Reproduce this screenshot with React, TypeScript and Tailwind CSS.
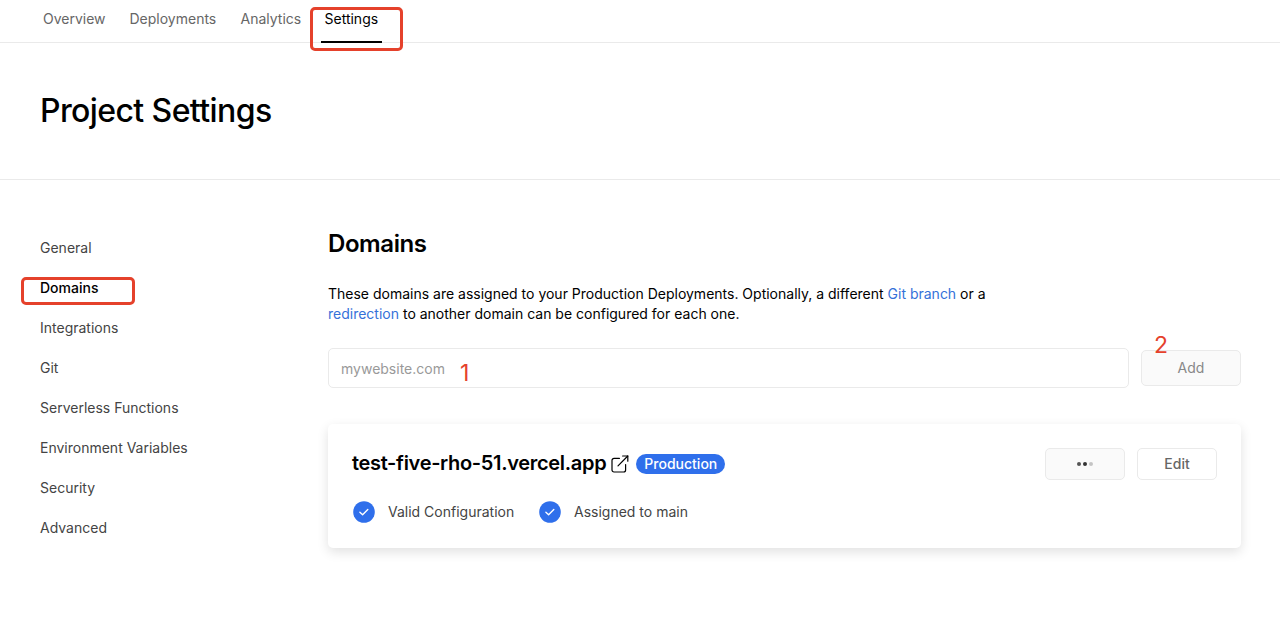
import { clsx } from 'clsx';

const tabs = [
  { name: 'Overview', width: 'w-[62.5px]' },
  { name: 'Deployments', width: 'w-[87px]' },
  { name: 'Analytics', width: 'w-[60px]' },
];

const sections = [
  'General',
  'Domains',
  'Integrations',
  'Git',
  'Serverless Functions',
  'Environment Variables',
  'Security',
  'Advanced',
];

const CheckBadge = () => (
  <svg className="w-[22px] h-[22px] shrink-0" viewBox="0 0 22 22" fill="none">
    <circle cx="11" cy="11" r="10.8" fill="#2f6feb" />
    <path d="M6.9 11.3l2.7 2.4L14.8 8.6" stroke="#fff" strokeWidth="1.4" strokeLinecap="round" strokeLinejoin="round" />
  </svg>
);

const ExternalLink = () => (
  <svg className="w-[18px] h-[18px] shrink-0" viewBox="0 0 18 18" fill="none" stroke="#000" strokeWidth="1.2" strokeLinecap="round" strokeLinejoin="round">
    <path d="M14.6 9.6v5.4a2 2 0 0 1-2 2H3a2 2 0 0 1-2-2V5.4a2 2 0 0 1 2-2h5.4" />
    <path d="M11.6 1h5.2v5.2" />
    <path d="M7 10.8L16.8 1" />
  </svg>
);

const App = () => {
  return (
    <div className="relative h-[631px] w-[1280px] overflow-hidden bg-white font-['Inter',sans-serif] text-sm text-black">
      {/* Project tabs */}
      <nav className="flex h-[43px] gap-6 border-b border-[#eaeaea] pl-[43px] text-[#666]">
        {tabs.map((tab) => (
          <a key={tab.name} className={clsx('pt-[9px] whitespace-nowrap', tab.width)}>
            {tab.name}
          </a>
        ))}
        <a className="relative -ml-[3.5px] h-[43px] w-[61px] border-b-2 border-black pt-[9px] pl-[3.5px] text-black">
          Settings
          <span className="absolute top-[6.5px] -left-[11.5px] h-[44.5px] w-[93.5px] rounded-[5px] border-3 border-[#e5412b]" />
        </a>
      </nav>

      {/* Page title */}
      <header className="flex h-[137px] items-center border-b border-[#eaeaea] pl-10">
        <h1 className="text-[32px] font-medium tracking-[-0.6px]">Project Settings</h1>
      </header>

      <div className="flex pl-10">
        {/* Sidebar */}
        <aside className="w-[288px] pt-12 text-[#444]">
          {sections.map((section) => (
            <div key={section} className="flex h-10 items-center">
              {section === 'Domains' ? (
                <span className="relative font-medium text-black">
                  {section}
                  <span className="absolute -top-[1px] -left-[19px] h-[28px] w-[114px] rounded-[5px] border-3 border-[#e5412b]" />
                </span>
              ) : (
                <span>{section}</span>
              )}
            </div>
          ))}
        </aside>

        <main className="w-[913px] pt-12">
          <h2 className="text-2xl leading-8 font-semibold tracking-[-0.42px]">Domains</h2>
          <p className="mt-6 leading-5 whitespace-nowrap">
            These domains are assigned to your Production Deployments. Optionally, a different{' '}
            <a className="text-[#3571d9]">Git branch</a> or a
            <br />
            <a className="text-[#3571d9]">redirection</a> to another domain can be configured for each one.
          </p>

          {/* Add domain */}
          <div className="mt-6 flex items-center gap-3">
            <div className="relative flex h-10 w-[801px] items-center rounded-[5px] border border-[#eaeaea] pl-3 text-[#999]">
              <span className="pt-0.5">mywebsite.com</span>
              <span className="absolute top-[8px] left-[131px] text-[23px] leading-8 text-[#e5412b]">1</span>
            </div>
            <button className="relative h-9 w-[100px] rounded-[5px] border border-[#eaeaea] bg-[#fafafa] text-[#888]">
              Add
              <span className="absolute -top-[22px] left-[12px] text-[23px] leading-8 text-[#e5412b]">2</span>
            </button>
          </div>

          {/* Domain card */}
          <section className="mt-9 flex h-[124px] justify-between rounded-[5px] p-6 shadow-[0_4px_12px_rgba(0,0,0,0.12)]">
            <div>
              <div className="flex h-8 items-center">
                <h3 className="pb-0.5 text-xl font-semibold tracking-[-0.32px]">test-five-rho-51.vercel.app</h3>
                <span className="ml-[5px]">
                  <ExternalLink />
                </span>
                <span className="ml-[7px] flex h-5 w-[89px] items-center justify-center rounded-full bg-[#2f6feb] font-medium text-white">
                  Production
                </span>
              </div>
              <div className="mt-[21px] flex items-center pl-px text-[#444]">
                <CheckBadge />
                <span className="ml-[13px] w-[126px] whitespace-nowrap">Valid Configuration</span>
                <span className="ml-[25px]">
                  <CheckBadge />
                </span>
                <span className="ml-[13px]">Assigned to main</span>
              </div>
            </div>
            <div className="flex gap-3">
              <button className="flex h-8 w-20 items-center justify-center gap-[2px] rounded-[5px] border border-[#eaeaea] bg-[#fafafa]">
                <span className="h-1 w-1 rounded-full bg-[#555]" />
                <span className="h-1 w-1 rounded-full bg-[#333]" />
                <span className="h-1 w-1 rounded-full bg-[#c4c4c4]" />
              </button>
              <button className="h-8 w-20 rounded-[5px] border border-[#eaeaea] font-medium text-[#666]">Edit</button>
            </div>
          </section>
        </main>
      </div>
    </div>
  );
};

export default App;
